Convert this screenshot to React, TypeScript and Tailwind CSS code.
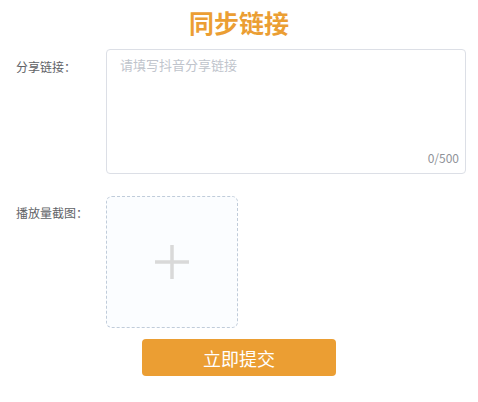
const font = { fontFamily: '"Noto Sans CJK SC", "Noto Sans", sans-serif' };

export default function App() {
  return (
    <div className="w-[478px] h-[402px] bg-white" style={font}>
      <h1 className="pt-[8px] text-center text-[25px] leading-[28px] font-bold text-[#eb9e33]">同步链接</h1>

      <div className="mt-[13px] flex pl-[16px]">
        <label className="w-[90px] mt-[8px] text-[12px] leading-[20px] text-[#606266]">分享链接：</label>
        <div className="relative w-[360px] h-[125px] rounded-[4px] border border-[#dcdfe6]">
          <textarea
            className="w-full h-full resize-none px-[13px] py-[5px] text-[13px] leading-[20px] text-[#606266] placeholder:text-[#c0c4cc] outline-none bg-transparent"
            placeholder="请填写抖音分享链接"
          />
          <span className="absolute right-[6px] bottom-[8px] text-[12px] leading-[14px] text-[#909399]">0/500</span>
        </div>
      </div>

      <div className="mt-[22px] flex pl-[16px]">
        <label className="w-[90px] mt-[7px] text-[12px] leading-[20px] text-[#606266]">播放量截图：</label>
        <div className="w-[132px] h-[132px] rounded-[6px] border border-dashed border-[#c0ccda] bg-[#fbfdff] flex items-center justify-center">
          <svg width="38" height="38" viewBox="0 0 38 38">
            <path d="M19 2v34M2 19h34" stroke="#d9d9d9" strokeWidth="3.5" fill="none" />
          </svg>
        </div>
      </div>

      <div className="mt-[11px] flex justify-center">
        <button className="w-[194px] h-[37px] rounded-[4px] bg-[#eb9e33] text-white text-[18px] leading-[24px]">立即提交</button>
      </div>
    </div>
  );
}
